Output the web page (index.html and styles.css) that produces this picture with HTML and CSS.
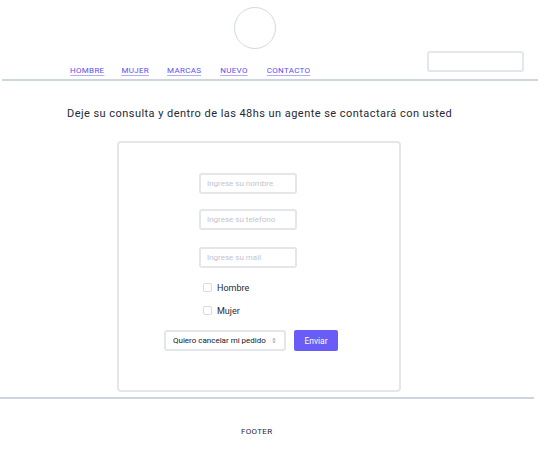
FILE: index.html
```html
<!DOCTYPE html>
<html lang="es">
<head>
<meta charset="utf-8">
<title>Contacto</title>
<link rel="stylesheet" href="styles.css">
</head>
<body>
<header class="header">
  <div class="logo-row"><div class="logo"></div></div>
  <div class="nav-row">
    <nav class="nav">
      <a href="#">HOMBRE</a>
      <a href="#">MUJER</a>
      <a href="#">MARCAS</a>
      <a href="#">NUEVO</a>
      <a href="#">CONTACTO</a>
    </nav>
    <input class="search" type="text">
  </div>
</header>
<main class="main">
  <p class="intro">Deje su consulta y dentro de las 48hs un agente se contactará con usted</p>
  <form class="card">
    <input class="field" type="text" placeholder="Ingrese su nombre">
    <input class="field" type="text" placeholder="Ingrese su telefono">
    <input class="field" type="text" placeholder="Ingrese su mail">
    <label class="check"><span class="box"></span>Hombre</label>
    <label class="check"><span class="box"></span>Mujer</label>
    <div class="actions">
      <div class="select">Quiero cancelar mi pedido <span class="arrows">⇕</span></div>
      <button class="btn" type="button">Enviar</button>
    </div>
  </form>
</main>
<footer class="footer">FOOTER</footer>
</body>
</html>
```
FILE: styles.css
```css
* { box-sizing: border-box; }
body {
  margin: 0;
  font-family: Roboto, "Liberation Sans", sans-serif;
  color: #1f2937;
  background: #fff;
}
.header {
  height: 81px;
  margin: 0 2px;
  border-bottom: 2px solid #cfd5de;
  display: flex;
  flex-direction: column;
}
.logo-row {
  padding: 7px 0 0 232px;
}
.logo {
  width: 42px;
  height: 42px;
  border: 1px solid #d3d9e1;
  border-radius: 50%;
}
.nav-row {
  display: flex;
  align-items: flex-end;
  padding: 2px 0 0 68px;
}
.nav {
  display: flex;
  gap: 17px;
  margin-bottom: -3px;
}
.nav a {
  color: #5b4ff0;
  font-size: 8px;
  letter-spacing: 0.3px;
  text-decoration: underline;
  text-decoration-color: #b4aef8;
  text-underline-offset: 2px;
}
.nav a:nth-child(n+3) { margin-left: 1px; }
.nav a:nth-child(n+4) { margin-left: 2px; }
.search {
  margin-left: auto;
  margin-right: 14px;
  width: 97px;
  height: 21px;
  border: 2px solid #e3e7ec;
  border-radius: 3px;
}
.main {
  padding-top: 25px;
  padding-bottom: 5px;
}
.intro {
  margin: 0 0 19px 67px;
  font-size: 11px;
  letter-spacing: 0.45px;
  color: #1f2937;
  line-height: 16px;
}
.card {
  margin-left: 117px;
  width: 284px;
  height: 251px;
  border: 2px solid #e3e7ec;
  border-radius: 4px;
  display: flex;
  flex-direction: column;
  align-items: flex-start;
  padding: 30px 0 0 80px;
}
.field {
  width: 98px;
  height: 21px;
  border: 2px solid #e3e7ec;
  border-radius: 3px;
  padding: 0 6px;
  font-family: inherit;
  font-size: 8px;
  margin-bottom: 15px;
}
.field:nth-child(2) { margin-bottom: 17px; }
.field::placeholder { color: #c0c6cf; }
.field:nth-child(3) { margin-bottom: 12px; }
.check {
  display: flex;
  align-items: center;
  gap: 5px;
  font-size: 9px;
  margin-left: 4px;
  height: 15px;
  margin-bottom: 8px;
  color: #1f2937;
}
.box {
  width: 9px;
  height: 9px;
  border: 1px solid #d6dbe2;
  border-radius: 2px;
}
.actions {
  margin-left: -35px;
  margin-top: 4px;
  display: flex;
  gap: 8px;
}
.select {
  width: 122px;
  height: 21px;
  border: 2px solid #e3e7ec;
  border-radius: 3px;
  display: flex;
  align-items: center;
  padding-left: 7px;
  font-size: 8px;
  color: #111827;
}
.arrows { margin-left: 5px; color: #9ca3af; font-size: 7px; }
.btn {
  width: 44px;
  height: 21px;
  background: #6a5cf6;
  color: #fff;
  border: none;
  border-radius: 2px;
  font-family: inherit;
  font-size: 8.5px;
}
.footer {
  margin-right: 6px;
  border-top: 2px solid #cfd5de;
  height: 66px;
  display: flex;
  align-items: center;
  padding-left: 241px;
  font-size: 8px;
  letter-spacing: 0.3px;
  color: #1f2937;
}
```
